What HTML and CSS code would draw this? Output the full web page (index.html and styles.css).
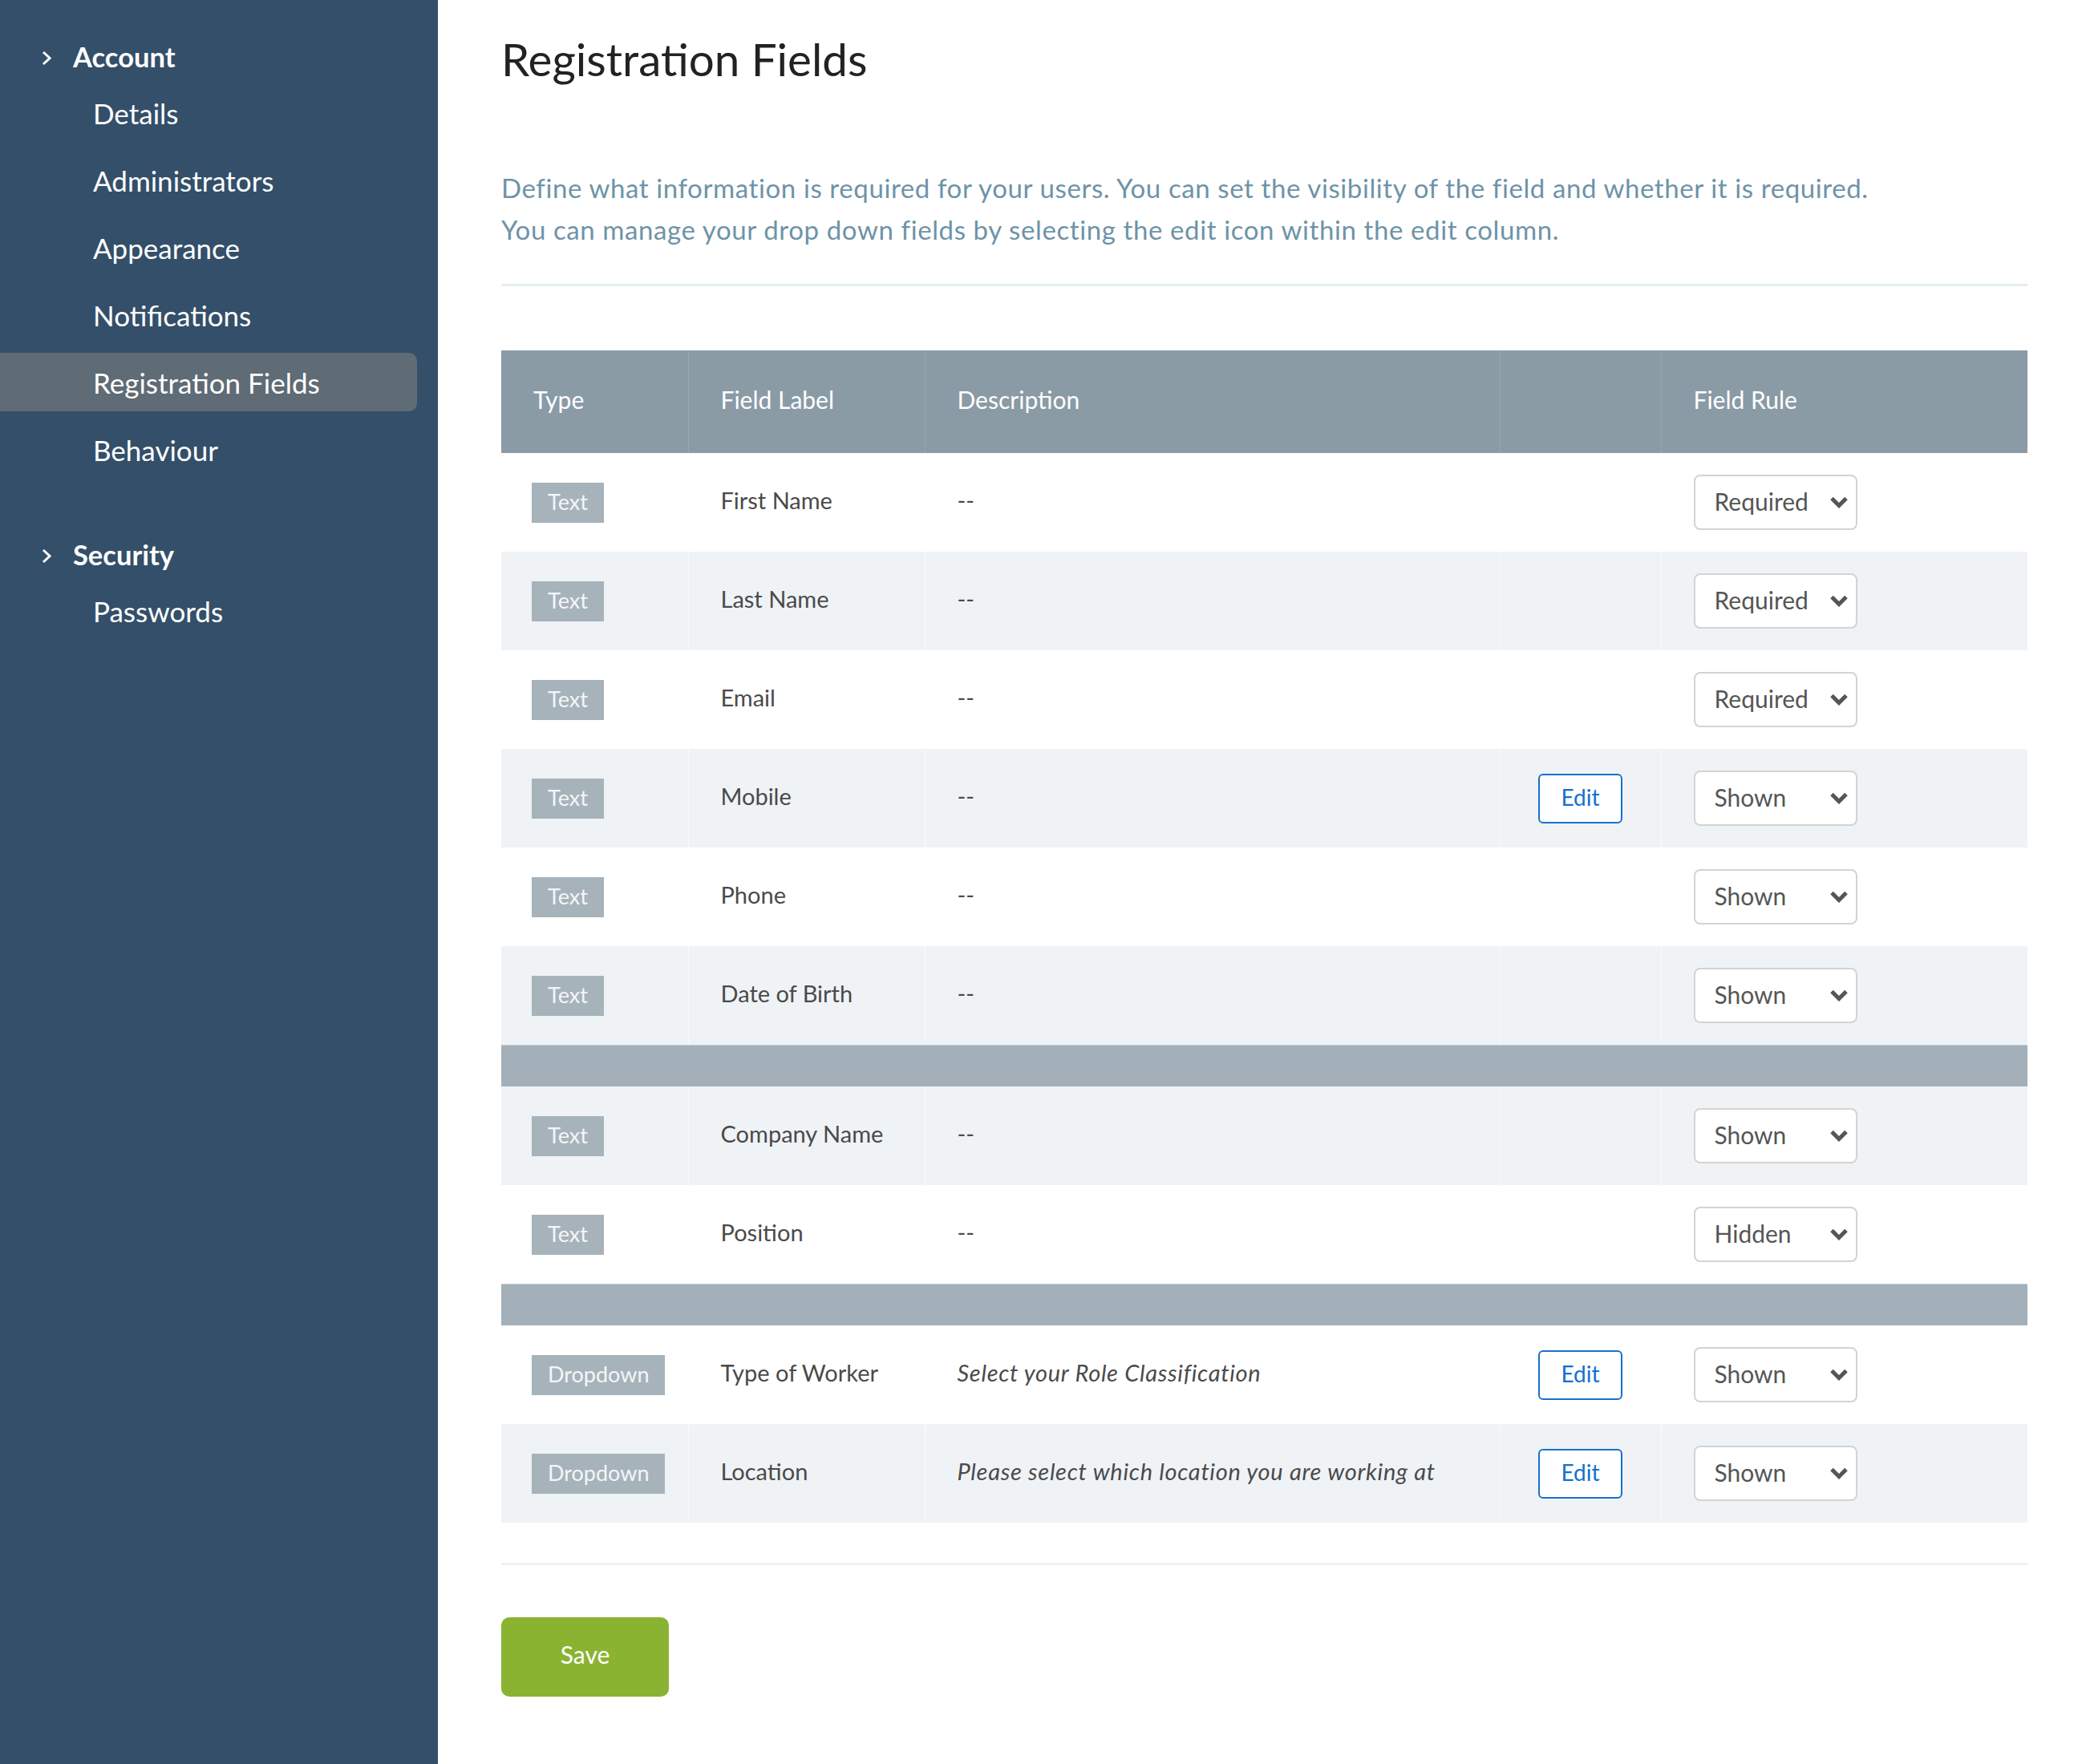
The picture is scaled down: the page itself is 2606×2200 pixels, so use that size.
FILE: index.html
```html
<!DOCTYPE html>
<html lang="en">
<head>
<meta charset="utf-8">
<title>Registration Fields</title>
<link rel="stylesheet" href="styles.css">
</head>
<body>
<div class="app">
  <nav class="sidebar">
    <div class="nav-group">
      <div class="nav-heading">
        <svg class="chev" viewBox="0 0 12 19" aria-hidden="true"><path d="M2 2 L10 9.5 L2 17" fill="none" stroke="#fff" stroke-width="3"/></svg>
        <span>Account</span>
      </div>
      <ul class="nav-list">
        <li><a class="nav-item" href="#">Details</a></li>
        <li><a class="nav-item" href="#">Administrators</a></li>
        <li><a class="nav-item" href="#">Appearance</a></li>
        <li><a class="nav-item" href="#">Notifications</a></li>
        <li><a class="nav-item active" href="#">Registration Fields</a></li>
        <li><a class="nav-item" href="#">Behaviour</a></li>
      </ul>
    </div>
    <div class="nav-group">
      <div class="nav-heading">
        <svg class="chev" viewBox="0 0 12 19" aria-hidden="true"><path d="M2 2 L10 9.5 L2 17" fill="none" stroke="#fff" stroke-width="3"/></svg>
        <span>Security</span>
      </div>
      <ul class="nav-list">
        <li><a class="nav-item" href="#">Passwords</a></li>
      </ul>
    </div>
  </nav>

  <main class="content">
    <h1 class="page-title">Registration Fields</h1>
    <p class="intro">Define what information is required for your users. You can set the visibility of the field and whether it is required.<br>You can manage your drop down fields by selecting the edit icon within the edit column.</p>
    <hr class="rule">

    <table class="fields">
      <colgroup>
        <col class="c-type"><col class="c-label"><col class="c-desc"><col class="c-edit"><col class="c-rule">
      </colgroup>
      <thead>
        <tr><th>Type</th><th>Field Label</th><th>Description</th><th></th><th>Field Rule</th></tr>
      </thead>
      <tbody>
        <tr><td><span class="badge">Text</span></td><td class="txt">First Name</td><td class="txt">--</td><td class="edit-cell"></td><td><div class="select"><span>Required</span><svg viewBox="0 0 24 15"><path d="M3 2.5 L12 11.5 L21 2.5" fill="none" stroke="#555" stroke-width="5"/></svg></div></td></tr>
        <tr><td><span class="badge">Text</span></td><td class="txt">Last Name</td><td class="txt">--</td><td class="edit-cell"></td><td><div class="select"><span>Required</span><svg viewBox="0 0 24 15"><path d="M3 2.5 L12 11.5 L21 2.5" fill="none" stroke="#555" stroke-width="5"/></svg></div></td></tr>
        <tr><td><span class="badge">Text</span></td><td class="txt">Email</td><td class="txt">--</td><td class="edit-cell"></td><td><div class="select"><span>Required</span><svg viewBox="0 0 24 15"><path d="M3 2.5 L12 11.5 L21 2.5" fill="none" stroke="#555" stroke-width="5"/></svg></div></td></tr>
        <tr><td><span class="badge">Text</span></td><td class="txt">Mobile</td><td class="txt">--</td><td class="edit-cell"><button class="btn-edit">Edit</button></td><td><div class="select"><span>Shown</span><svg viewBox="0 0 24 15"><path d="M3 2.5 L12 11.5 L21 2.5" fill="none" stroke="#555" stroke-width="5"/></svg></div></td></tr>
        <tr><td><span class="badge">Text</span></td><td class="txt">Phone</td><td class="txt">--</td><td class="edit-cell"></td><td><div class="select"><span>Shown</span><svg viewBox="0 0 24 15"><path d="M3 2.5 L12 11.5 L21 2.5" fill="none" stroke="#555" stroke-width="5"/></svg></div></td></tr>
        <tr><td><span class="badge">Text</span></td><td class="txt">Date of Birth</td><td class="txt">--</td><td class="edit-cell"></td><td><div class="select"><span>Shown</span><svg viewBox="0 0 24 15"><path d="M3 2.5 L12 11.5 L21 2.5" fill="none" stroke="#555" stroke-width="5"/></svg></div></td></tr>
        <tr class="group-sep"><td colspan="5"></td></tr>
        <tr><td><span class="badge">Text</span></td><td class="txt">Company Name</td><td class="txt">--</td><td class="edit-cell"></td><td><div class="select"><span>Shown</span><svg viewBox="0 0 24 15"><path d="M3 2.5 L12 11.5 L21 2.5" fill="none" stroke="#555" stroke-width="5"/></svg></div></td></tr>
        <tr><td><span class="badge">Text</span></td><td class="txt">Position</td><td class="txt">--</td><td class="edit-cell"></td><td><div class="select"><span>Hidden</span><svg viewBox="0 0 24 15"><path d="M3 2.5 L12 11.5 L21 2.5" fill="none" stroke="#555" stroke-width="5"/></svg></div></td></tr>
        <tr class="group-sep"><td colspan="5"></td></tr>
        <tr><td><span class="badge">Dropdown</span></td><td class="txt">Type of Worker</td><td class="txt desc-text">Select your Role Classification</td><td class="edit-cell"><button class="btn-edit">Edit</button></td><td><div class="select"><span>Shown</span><svg viewBox="0 0 24 15"><path d="M3 2.5 L12 11.5 L21 2.5" fill="none" stroke="#555" stroke-width="5"/></svg></div></td></tr>
        <tr><td><span class="badge">Dropdown</span></td><td class="txt">Location</td><td class="txt desc-text">Please select which location you are working at</td><td class="edit-cell"><button class="btn-edit">Edit</button></td><td><div class="select"><span>Shown</span><svg viewBox="0 0 24 15"><path d="M3 2.5 L12 11.5 L21 2.5" fill="none" stroke="#555" stroke-width="5"/></svg></div></td></tr>
      </tbody>
    </table>

    <hr class="rule rule-bottom">
    <button class="btn-save">Save</button>
  </main>
</div>
</body>
</html>
```

FILE: styles.css
```css
body {
  margin: 0;
  font-family: Lato, "Liberation Sans", sans-serif;
  background: #fff;
}

.app {
  display: flex;
  min-height: 2200px;
}

/* Sidebar navigation */
.sidebar {
  width: 546px;
  flex: none;
  box-sizing: border-box;
  background: #344f69;
  padding: 45px 26px 0 0;
  color: #fff;
}

.nav-group + .nav-group {
  margin-top: 69px;
}

.nav-heading {
  display: flex;
  align-items: center;
  height: 50px;
  padding-left: 52px;
  margin-bottom: 9px;
  font-size: 34.5px;
  font-weight: 700;
}

.nav-heading .chev {
  width: 12px;
  height: 19px;
  margin: 4px 27px 0 0;
  flex: none;
}

.nav-list {
  list-style: none;
  margin: 0;
  padding: 0;
  display: flex;
  flex-direction: column;
  gap: 11px;
}

.nav-item {
  display: flex;
  align-items: center;
  height: 73px;
  padding-left: 116px;
  font-size: 35px;
  color: #fff;
  text-decoration: none;
  border-radius: 0 10px 10px 0;
}

.nav-item.active {
  background: #5f6b75;
}

/* Main content */
.content {
  flex: 1;
  min-width: 0;
  padding: 38px 78px 0 79px;
}

.page-title {
  margin: 0;
  font-size: 56.5px;
  line-height: 70px;
  font-weight: 400;
  color: #222;
}

.intro {
  margin: 100px 0 0;
  font-size: 33px;
  letter-spacing: 0.6px;
  line-height: 52px;
  color: #6e93a8;
}

.rule {
  border: 0;
  height: 3px;
  margin: 42px 0 0;
  background: #e4edf2;
}

.rule-bottom {
  margin-top: 50px;
  background: #eef1f4;
}

/* Fields table */
.fields {
  width: 100%;
  margin-top: 80px;
  border-collapse: collapse;
  table-layout: fixed;
}

.c-type { width: 233px; }
.c-label { width: 295px; }
.c-desc { width: 717px; }
.c-edit { width: 201px; }

.fields th {
  height: 128px;
  padding: 0 40px 6px;
  box-sizing: border-box;
  background: #8a9ba6;
  color: #fff;
  font-size: 30px;
  font-weight: 400;
  text-align: left;
}

.fields th + th {
  border-left: 1px solid rgba(255, 255, 255, 0.12);
}

.fields td {
  height: 123px;
  box-sizing: border-box;
  padding: 0 40px;
  font-size: 29px;
  color: #4a4a4a;
  vertical-align: middle;
}

.fields td.txt {
  padding-bottom: 6px;
}

.fields td + td {
  border-left: 1px solid rgba(255, 255, 255, 0.6);
}

.fields tbody tr:nth-child(even) {
  background: #eff3f6;
}

.fields tr.group-sep td {
  height: 52px;
  padding: 0;
  background: #a3b0b9;
  box-shadow: inset 0 1px 0 #c6ced4;
}

.badge {
  display: inline-block;
  height: 50px;
  line-height: 48px;
  padding: 0 20px;
  margin-left: -2px;
  background: #a7b3bb;
  color: #f4f6f8;
  font-size: 27px;
}

.desc-text {
  font-style: italic;
  letter-spacing: 0.7px;
}

.fields td.edit-cell {
  padding: 0;
  text-align: center;
}

.btn-edit {
  width: 105px;
  height: 62px;
  box-sizing: border-box;
  border: 2px solid #1a70cf;
  border-radius: 6px;
  background: #fff;
  color: #1270cf;
  font-family: inherit;
  font-size: 28px;
  padding: 0 0 4px;
}

.select {
  display: flex;
  align-items: center;
  justify-content: space-between;
  width: 204px;
  height: 69px;
  box-sizing: border-box;
  padding: 0 9px 0 24px;
  border: 2px solid #d3d3d3;
  border-radius: 8px;
  background: #fff;
  color: #555;
  font-size: 30px;
}

.select span {
  padding-bottom: 3px;
}

.select svg {
  width: 24px;
  height: 15px;
  flex: none;
}

.btn-save {
  display: block;
  width: 209px;
  height: 99px;
  margin-top: 65px;
  padding: 0 0 8px;
  border: 0;
  border-radius: 10px;
  background: #8bb332;
  color: #fff;
  font-family: inherit;
  font-size: 30px;
}
```
